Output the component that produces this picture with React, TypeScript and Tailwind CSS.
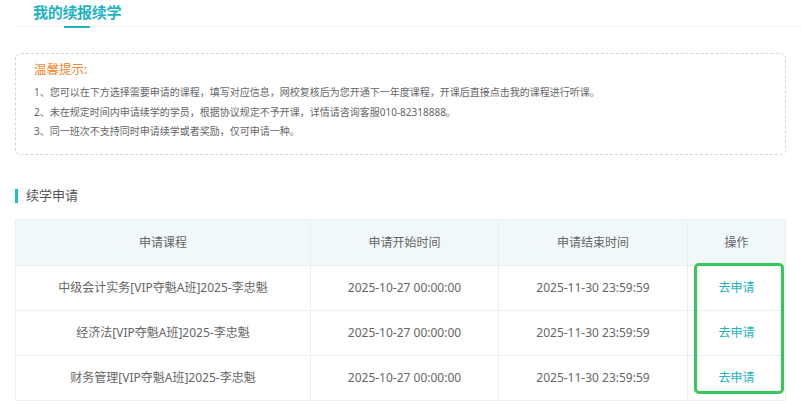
import React from "react";

type Row = { course: string; start: string; end: string };

const rows: Row[] = [
  { course: "中级会计实务[VIP夺魁A班]2025-李忠魁", start: "2025-10-27 00:00:00", end: "2025-11-30 23:59:59" },
  { course: "经济法[VIP夺魁A班]2025-李忠魁", start: "2025-10-27 00:00:00", end: "2025-11-30 23:59:59" },
  { course: "财务管理[VIP夺魁A班]2025-李忠魁", start: "2025-10-27 00:00:00", end: "2025-11-30 23:59:59" },
];

const tips = [
  "1、您可以在下方选择需要申请的课程，填写对应信息，网校复核后为您开通下一年度课程，开课后直接点击我的课程进行听课。",
  "2、未在规定时间内申请续学的学员，根据协议规定不予开课，详情请咨询客服010-82318888。",
  "3、同一班次不支持同时申请续学或者奖励，仅可申请一种。",
];

const cols = "grid grid-cols-[295px_188px_189px_1fr]";

export default function App() {
  return (
    <div
      className="relative w-[801px] h-[404px] overflow-hidden bg-white pl-[15px]"
      style={{ fontFamily: '"Noto Sans", "Noto Sans CJK SC", sans-serif' }}
    >
      {/* header tab */}
      <div className="h-[27px] border-b border-[#f2f2f2]">
        <div className="inline-flex flex-col items-center ml-[18px]">
          <div className="h-[20px] leading-[20px] text-[15px] font-bold text-[#1db3c3] tracking-[-0.3px]">
            我的续报续学
          </div>
          <div className="mt-[4px] h-[2px] w-[26px] bg-[#1db3c3]" />
        </div>
      </div>

      <div className="w-[771px]">
        {/* notice */}
        <div className="mt-[26px] h-[102px] rounded-md border border-dashed border-[#d6d6d6] pl-[18px] pt-[7px]">
          <div className="h-[18px] leading-[18px] text-[12.5px] text-[#f5832a]">温馨提示:</div>
          <div className="mt-[4px]">
            {tips.map((t) => (
              <div key={t} className="h-[19.5px] leading-[19.5px] text-[10px] text-[#666]">
                {t}
              </div>
            ))}
          </div>
        </div>

        {/* section title */}
        <div className="mt-[34px] flex h-[14px] items-center">
          <div className="h-[14px] w-[3px] bg-[#1cc0cc]" />
          <div className="ml-[8px] text-[13px] text-[#555]">续学申请</div>
        </div>

        {/* table */}
        <div className="mt-[16px] border-l border-t border-[#eceff1] text-[12px] text-[#666]">
          <div className={`${cols} h-[46px] bg-[#f1f8fa]`}>
            {["申请课程", "申请开始时间", "申请结束时间", "操作"].map((h) => (
              <div key={h} className="flex items-center justify-center border-b border-r border-[#eceff1]">
                {h}
              </div>
            ))}
          </div>
          {rows.map((r) => (
            <div key={r.course} className={`${cols} h-[45px]`}>
              <div className="flex items-center justify-center border-b border-r border-[#eceff1]">{r.course}</div>
              <div className="flex items-center justify-center border-b border-r border-[#eceff1]">{r.start}</div>
              <div className="flex items-center justify-center border-b border-r border-[#eceff1]">{r.end}</div>
              <div className="flex items-center justify-center border-b border-r border-[#eceff1] text-[#1db3c3]">
                去申请
              </div>
            </div>
          ))}
        </div>
      </div>

      {/* highlight annotation */}
      <div className="absolute left-[694px] top-[263px] h-[131px] w-[90px] rounded-[5px] border-[3px] border-[#34c759]" />
    </div>
  );
}
